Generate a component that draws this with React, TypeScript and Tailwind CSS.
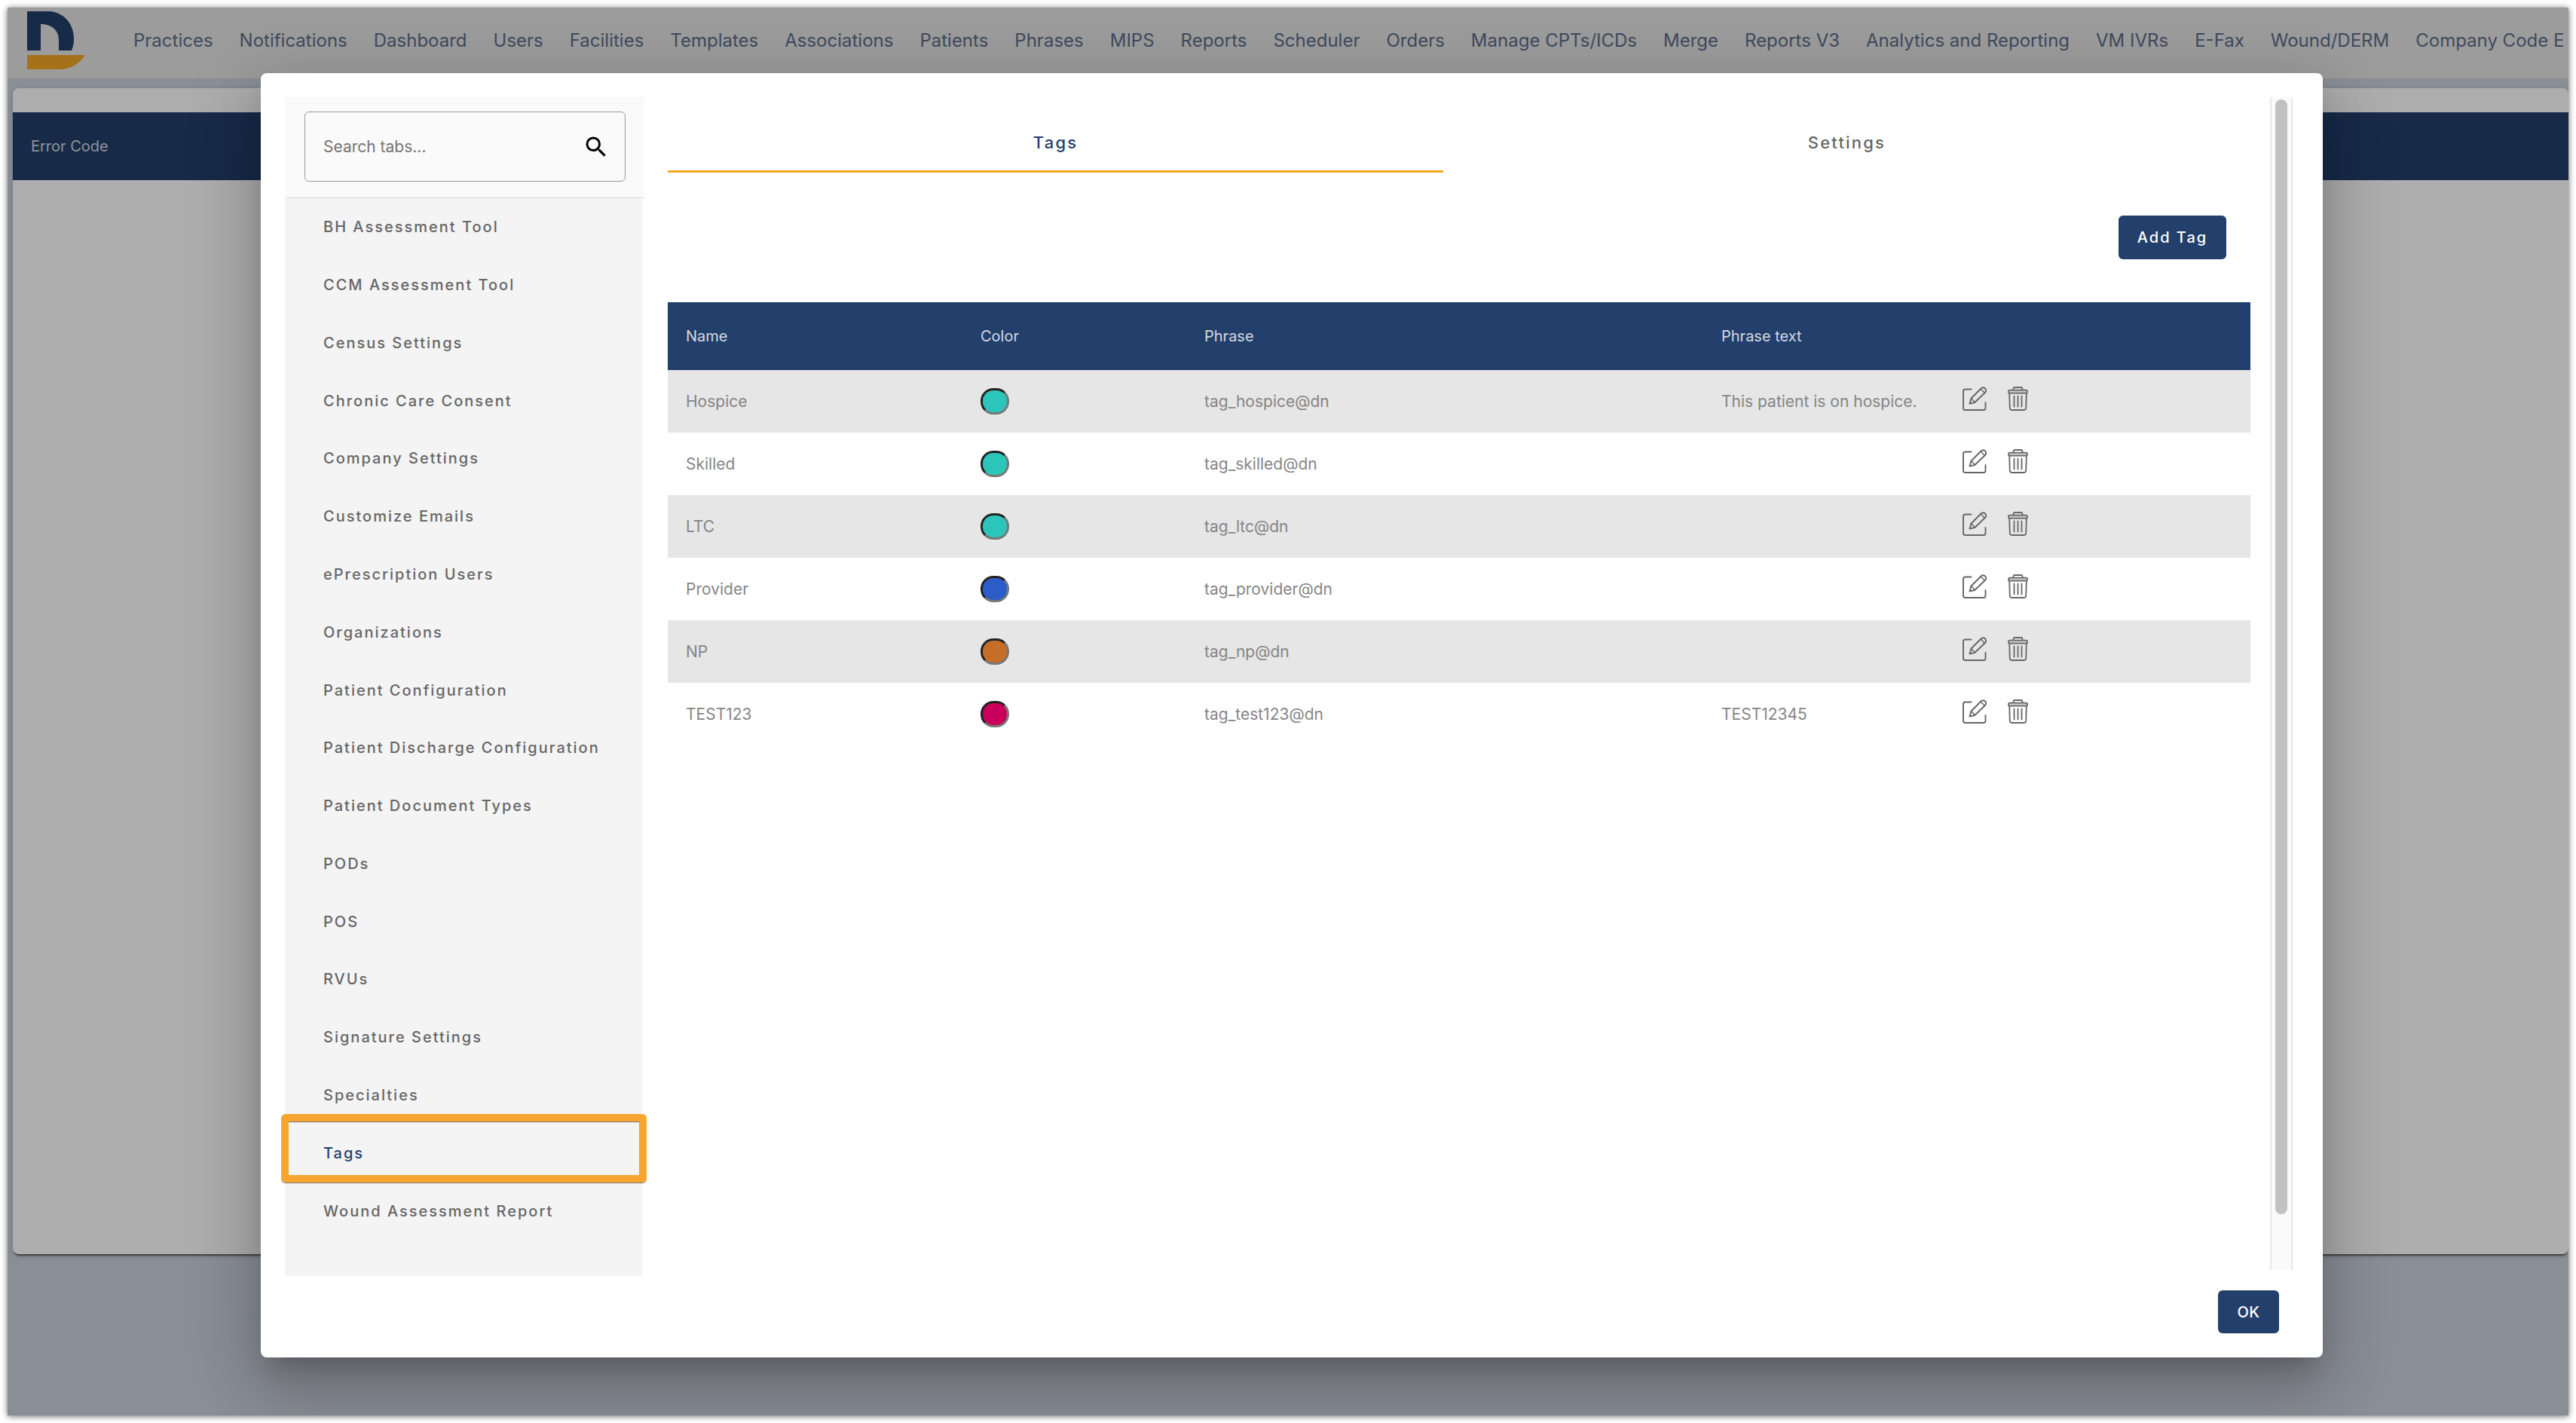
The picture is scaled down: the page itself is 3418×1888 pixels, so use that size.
import { MdSearch } from "react-icons/md";

const NAV_LINKS = [
  "Practices",
  "Notifications",
  "Dashboard",
  "Users",
  "Facilities",
  "Templates",
  "Associations",
  "Patients",
  "Phrases",
  "MIPS",
  "Reports",
  "Scheduler",
  "Orders",
  "Manage CPTs/ICDs",
  "Merge",
  "Reports V3",
  "Analytics and Reporting",
  "VM IVRs",
  "E-Fax",
  "Wound/DERM",
  "Company Code E",
];

const SIDE_TABS = [
  "BH Assessment Tool",
  "CCM Assessment Tool",
  "Census Settings",
  "Chronic Care Consent",
  "Company Settings",
  "Customize Emails",
  "ePrescription Users",
  "Organizations",
  "Patient Configuration",
  "Patient Discharge Configuration",
  "Patient Document Types",
  "PODs",
  "POS",
  "RVUs",
  "Signature Settings",
  "Specialties",
  "Tags",
  "Wound Assessment Report",
];

const TAGS = [
  { name: "Hospice", color: "bg-[#2cc5b9]", phrase: "tag_hospice@dn", text: "This patient is on hospice." },
  { name: "Skilled", color: "bg-[#2cc5b9]", phrase: "tag_skilled@dn", text: "" },
  { name: "LTC", color: "bg-[#2cc5b9]", phrase: "tag_ltc@dn", text: "" },
  { name: "Provider", color: "bg-[#2c5cc8]", phrase: "tag_provider@dn", text: "" },
  { name: "NP", color: "bg-[#c66d28]", phrase: "tag_np@dn", text: "" },
  { name: "TEST123", color: "bg-[#c9005b]", phrase: "tag_test123@dn", text: "TEST12345" },
];

const Logo = () => (
  <svg width="77" height="77" viewBox="0 0 77 77" className="shrink-0" aria-hidden="true">
    <path
      d="M0 0H29C49 1 62 17 62 36C62 42 61 47 59 52H42V38C42 25 32 17 18 17V52H0Z"
      fill="#233f6b"
    />
    <path d="M0 58H77C70 69 58 77 43 77H0Z" fill="#f4a825" />
  </svg>
);

const EditIcon = () => (
  <svg width="32" height="32" viewBox="0 0 32 32" fill="none" stroke="#666" strokeWidth="1.9" strokeLinecap="round" strokeLinejoin="round" aria-hidden="true">
    <path d="M11.5 3.5H3.5Q1 3.5 1 6V28.5Q1 31 3.5 31H28Q30.5 31 30.5 28.5V21" />
    <path d="M9.5 22.5L11.5 15.5L24.5 2.5Q27 0 29.8 2.2Q32.5 5 30 7.8L16.5 20.8Z" />
    <path d="M11.5 15.5L16.5 20.8M24 3L29.5 8.3" strokeWidth="1.5" />
  </svg>
);

const TrashIcon = () => (
  <svg width="27" height="32" viewBox="0 0 27 32" fill="none" stroke="#666" strokeWidth="1.8" strokeLinecap="round" strokeLinejoin="round" aria-hidden="true">
    <path d="M7.5 4.5V3Q7.5 1 9.5 1H17.5Q19.5 1 19.5 3V4.5" />
    <rect x="1" y="4.7" width="25" height="4" rx="1.5" fill="#ccc" />
    <path d="M2.2 9L2.8 28.5Q3 31 5.5 31H21.5Q24 31 24.2 28.5L24.8 9" />
    <path d="M8.5 12.5V26.5M13.5 12.5V26.5M18.5 12.5V26.5" />
  </svg>
);

const Navbar = () => (
  <header className="flex h-[94px] shrink-0 items-start overflow-hidden bg-[#e6e6e6] pl-[26px] pt-[5px]">
    <Logo />
    <nav className="flex h-[78px] items-center gap-[35px] pl-16">
      {NAV_LINKS.map((link) => (
        <a key={link} href="#" className="whitespace-nowrap text-2xl text-[#5f6e8a]">
          {link}
        </a>
      ))}
    </nav>
  </header>
);

const Sidebar = () => (
  <aside className="flex w-[477px] shrink-0 flex-col">
    <div className="border-b border-[#dcdcdc] bg-[#fafafa] pb-[21px] pl-[26px] pr-[25px] pt-[19px]">
      <label className="flex h-[93px] items-center rounded-md border border-[#999] pl-6 pr-5">
        <input
          type="text"
          aria-label="Search tabs"
          placeholder="Search tabs..."
          className="min-w-0 flex-1 bg-transparent text-[21px] outline-none placeholder:text-[#757575]"
        />
        <MdSearch className="h-9 w-9 text-black" />
      </label>
    </div>
    <nav className="mr-[3px] grid flex-1 auto-rows-fr bg-[#f4f4f4] pb-12">
      {SIDE_TABS.map((tab) => (
        <button
          key={tab}
          className={`relative pl-[51px] text-left text-[20px] font-medium tracking-widest ${
            tab === "Tags" ? "text-[#233f6b]" : "text-[#666]"
          }`}
        >
          {tab}
          {tab === "Tags" && (
            <span className="absolute -bottom-px -left-[5px] -right-[6px] -top-[13px] rounded-md border-10 border-[#f7a430] shadow-[0_1px_0_#777,inset_0_1px_0_#777]" />
          )}
        </button>
      ))}
    </nav>
  </aside>
);

const TagsTable = () => (
  <table className="w-full table-fixed text-left text-[21px]">
    <colgroup>
      <col className="w-[391px]" />
      <col className="w-[297px]" />
      <col className="w-[686px]" />
      <col className="w-[320px]" />
      <col />
    </colgroup>
    <thead>
      <tr className="h-[90px] bg-[#233f6b] text-[20px] text-[#d3d9e1]">
        <th className="pl-6 font-normal">Name</th>
        <th className="pl-6 font-normal">Color</th>
        <th className="pl-6 font-normal">Phrase</th>
        <th className="pl-6 font-normal">Phrase text</th>
        <th />
      </tr>
    </thead>
    <tbody>
      {TAGS.map((tag) => (
        <tr key={tag.name} className="h-[83px] text-[#858585] odd:bg-[#e6e6e6]">
          <td className="pl-6">{tag.name}</td>
          <td className="pl-6">
            <button
              aria-label={`${tag.name} color`}
              className={`block h-[35px] w-[38px] rounded-[17px] border-3 border-b-[#777] border-l-[#222] border-r-[#777] border-t-[#222] ${tag.color}`}
            />
          </td>
          <td className="pl-6">{tag.phrase}</td>
          <td className="whitespace-nowrap pl-6">{tag.text}</td>
          <td className="pb-2 pl-6">
            <div className="flex gap-7">
              <button aria-label={`Edit ${tag.name}`}>
                <EditIcon />
              </button>
              <button aria-label={`Delete ${tag.name}`}>
                <TrashIcon />
              </button>
            </div>
          </td>
        </tr>
      ))}
    </tbody>
  </table>
);

const TagsDialog = () => (
  <div
    role="dialog"
    aria-label="Company settings"
    className="flex flex-1 flex-col rounded-lg bg-white pb-8 pl-8 pr-10 pt-8 shadow-[0_22px_30px_-14px_rgba(0,0,0,0.2),0_48px_76px_6px_rgba(0,0,0,0.14),0_18px_92px_16px_rgba(0,0,0,0.12)]"
  >
    <div className="flex flex-1">
      <Sidebar />
      <section className="ml-[31px] mr-[26px] flex-1">
        <div className="flex h-[100px] text-[22px] font-medium tracking-widest">
          <button className="w-[49%] border-b-3 border-[#f7a823] pb-2 pt-8 text-[#233f6b]">Tags</button>
          <button className="flex-1 border-b-3 border-transparent pb-2 pt-8 text-[#666]">Settings</button>
        </div>
        <div className="flex justify-end pb-[57px] pr-8 pt-[57px]">
          <button className="h-[58px] w-[143px] rounded-md bg-[#233f6b] text-[20px] font-medium tracking-widest text-white">
            Add Tag
          </button>
        </div>
        <TagsTable />
      </section>
      <div className="mb-2 flex w-[30px] flex-col items-center border-x-2 border-[#e8e8e8] bg-[#fafafa] pb-[74px] pt-[3px]">
        <div className="w-4 flex-1 rounded-full bg-[#c1c1c1]" />
      </div>
    </div>
    <div className="flex justify-end pr-[18px] pt-[19px]">
      <button className="h-[57px] w-[81px] rounded-md bg-[#233f6b] text-[20px] font-medium tracking-wide text-white">
        OK
      </button>
    </div>
  </div>
);

const App = () => {
  return (
    <div className="h-screen bg-white p-[10px] font-['Inter',sans-serif]">
      <div className="relative flex h-full flex-col overflow-hidden bg-[#ccd2de] shadow-[0_1px_8px_rgba(0,0,0,0.6)]">
        <Navbar />
        <main className="flex flex-1 flex-col pb-[214px] pl-[7px] pt-[13px]">
          <div className="flex-1 rounded-lg bg-white pt-8 shadow-[0_4px_2px_-2px_rgba(0,0,0,0.5),0_2px_6px_rgba(0,0,0,0.2)]">
            <table className="w-full text-left text-[20px]">
              <thead>
                <tr className="h-[90px] bg-[#233f6b] text-[#d3d9e1]">
                  <th className="pl-6 font-normal">Error Code</th>
                </tr>
              </thead>
            </table>
          </div>
        </main>
        <div className="absolute inset-0 flex bg-black/32 pb-[77px] pl-[336px] pr-[326px] pt-[87px]">
          <TagsDialog />
        </div>
      </div>
    </div>
  );
};

export default App;
